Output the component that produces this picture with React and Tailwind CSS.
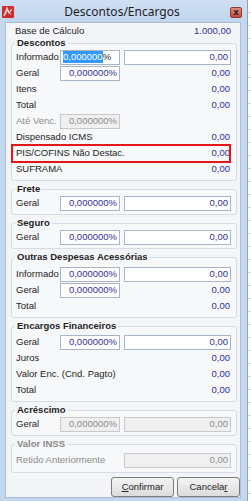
import React from "react";

const Box = ({ w, disabled, children, left }) => (
  <div
    className={`h-[15px] shrink-0 border flex items-center ${left ? "justify-start pl-[2px]" : "justify-end pr-[2px]"} ${
      disabled
        ? "bg-[#f0f0f0] border-[#c6cacf] text-[#8c8c8c]"
        : "bg-white border-[#a8b5c5] text-[#2f2f9c]"
    } ${w}`}
  >
    {children}
  </div>
);

const Row = ({ label, gray, children }) => (
  <div className="relative flex items-center h-[16px] pl-[4px]">
    <div
      className={`w-[44px] shrink-0 whitespace-nowrap ${gray ? "text-[#8c8c8c]" : "text-[#1e1e1e]"}`}
    >
      {label}
    </div>
    {children}
  </div>
);

const ValRow = ({ label, value = "0,00", gray }) => (
  <div className="flex items-center justify-between h-[16px] pl-[4px] pr-[6px]">
    <span className={gray ? "text-[#8c8c8c]" : "text-[#1e1e1e]"}>{label}</span>
    <span className="text-[#2f2f9c]">{value}</span>
  </div>
);

const PctVal = ({ label, disabled, focused }) => (
  <Row label={label}>
    {focused ? (
      <Box w="w-[60px]" left>
        <span className="bg-[#3399ff] text-white">0,000000</span>
        <span className="text-[#1e1e1e]">%</span>
      </Box>
    ) : (
      <Box w="w-[60px]" disabled={disabled}>
        0,000000%
      </Box>
    )}
    <div className="w-[4px] shrink-0" />
    <Box w="w-[107px]" disabled={disabled}>
      0,00
    </Box>
  </Row>
);

const PctOnly = ({ label, disabled, gray, value }) => (
  <div className="flex items-center h-[16px] pl-[4px] pr-[6px]">
    <div className={`w-[44px] shrink-0 whitespace-nowrap ${gray ? "text-[#8c8c8c]" : "text-[#1e1e1e]"}`}>
      {label}
    </div>
    <Box w="w-[60px]" disabled={disabled}>
      0,000000%
    </Box>
    <div className="flex-1 text-right text-[#2f2f9c]">{value}</div>
  </div>
);

const Group = ({ title, gray, pt, pb, children }) => (
  <fieldset
    className={`ml-[5px] mr-[3px] mt-[2px] border border-[#d5dce4] rounded-[3px] bg-[#f6f8fa] ${pt} ${pb}`}
  >
    <legend
      className={`ml-[3px] px-[2px] font-bold leading-[12px] ${gray ? "text-[#8a8a8a]" : "text-[#1e1e1e]"}`}
    >
      {title}
    </legend>
    {children}
  </fieldset>
);

export default function App() {
  return (
    <div
      className="w-[251px] h-[501px] flex overflow-hidden bg-[#e9eef4] text-[9.5px] leading-[12px]"
      style={{ fontFamily: '"Liberation Sans", Arial, sans-serif' }}
    >
      <div className="w-[247px] h-full flex flex-col bg-[#c3d7ee] shrink-0">
        {/* title bar */}
        <div className="h-[22px] shrink-0 flex items-center px-[2px] bg-gradient-to-b from-[#cfe0f3] to-[#c0d5ed]">
          <svg width="12" height="12" viewBox="0 0 12 12" className="shrink-0 mt-[2px]">
            <rect x="0" y="0" width="12" height="12" rx="1" fill="#d42a2a" />
            <path d="M2 10 L5 2 L7 7 L10 3" stroke="#fbe0e0" strokeWidth="1.2" fill="none" />
            <path d="M3 9 L6 4 L9 9" stroke="#ffffff" strokeWidth="0.8" fill="none" opacity="0.8" />
          </svg>
          <div
            className="flex-1 text-center text-[#1e1e1e] text-[12px] leading-[14px] mt-[1px]"
            style={{ fontFamily: '"Noto Sans", "Liberation Sans", sans-serif' }}
          >
            Descontos/Encargos
          </div>
          <div className="w-[12px] h-[11px] mr-[3px] mt-[2px] flex items-center justify-center rounded-[2px] border border-[#8f3b32] bg-gradient-to-b from-[#e08a7c] to-[#c2493b] text-[#111] font-bold text-[9px] leading-[9px]">
            x
          </div>
        </div>

        {/* body */}
        <div className="flex-1 flex flex-col ml-[5px] mr-[6px] mb-[3px] bg-[#f3f5f8] border border-[#a9bed6]">
          <div className="pt-[2px]" />
          <div className="flex items-center justify-between h-[12px] pl-[9px] pr-[9px]">
            <span className="text-[#1e1e1e]">Base de Cálculo</span>
            <span className="text-[#2f2f9c]">1.000,00</span>
          </div>

          <fieldset className="ml-[5px] mr-[3px] border border-[#d5dce4] rounded-[3px] bg-[#f6f8fa] pb-[3px]">
            <legend className="ml-[3px] px-[2px] font-bold leading-[12px] text-[#1e1e1e]">Descontos</legend>
            <PctVal label="Informado" focused />
            <PctOnly label="Geral" value="0,00" />
            <ValRow label="Itens" />
            <ValRow label="Total" />
            <PctOnly label="Até Venc." gray disabled />
            <ValRow label="Dispensado ICMS" />
            <div className="relative">
              <ValRow label="PIS/COFINS Não Destac." />
              <div className="absolute -top-[1px] -bottom-[2px] -left-[1px] right-[5px] border-2 border-[#e3161c]" />
            </div>
            <ValRow label="SUFRAMA" />
          </fieldset>

          <Group title="Frete" pb="pb-[3px]">
            <PctVal label="Geral" />
          </Group>

          <Group title="Seguro" pb="pb-[3px]">
            <PctVal label="Geral" />
          </Group>

          <Group title="Outras Despesas Acessórias" pt="pt-[3px]" pb="pb-[3px]">
            <PctVal label="Informado" />
            <PctOnly label="Geral" value="0,00" />
            <ValRow label="Total" />
          </Group>

          <Group title="Encargos Financeiros" pt="pt-[2px]" pb="pb-[3px]">
            <PctVal label="Geral" />
            <ValRow label="Juros" />
            <ValRow label="Valor Enc. (Cnd. Pagto)" />
            <ValRow label="Total" />
          </Group>

          <Group title="Acréscimo" pb="pb-[3px]">
            <PctVal label="Geral" disabled />
          </Group>

          <Group title="Valor INSS" gray pt="pt-[2px]" pb="pb-[4px]">
            <div className="flex items-center h-[16px] pl-[4px]">
              <div className="w-[108px] shrink-0 whitespace-nowrap text-[#8c8c8c]">Retido Anteriormente</div>
              <Box w="w-[107px]" disabled>
                0,00
              </Box>
            </div>
          </Group>

          <div className="flex justify-end gap-[3px] mt-[4px] pr-[0px]">
            <button className="w-[63px] h-[20px] rounded-[3px] border border-[#7c7c7c] bg-gradient-to-b from-[#f4f4f4] to-[#dcdcdc] text-[#1e1e1e] text-[9.5px] leading-[12px]">
              <span className="underline">C</span>onfirmar
            </button>
            <button className="w-[63px] h-[20px] rounded-[3px] border border-[#7c7c7c] bg-gradient-to-b from-[#f4f4f4] to-[#dcdcdc] text-[#1e1e1e] text-[9.5px] leading-[12px]">
              Cancela<span className="underline">r</span>
            </button>
          </div>
        </div>
      </div>
      <div className="flex-1 h-full border-l border-[#8da3bd] bg-[repeating-linear-gradient(to_bottom,#ffffff_0px,#ffffff_12px,#cfd8e2_12px,#cfd8e2_13px)]" />
    </div>
  );
}
